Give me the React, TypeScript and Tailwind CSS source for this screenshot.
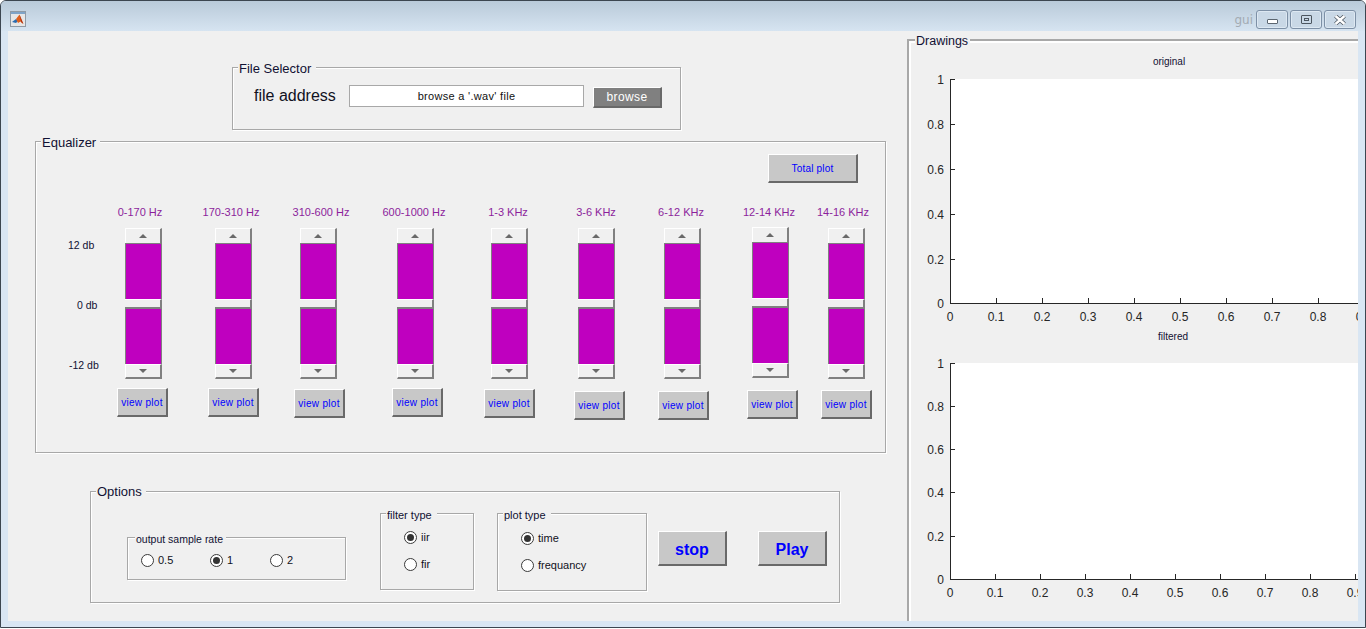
const F = "font-['Liberation_Sans',Arial,sans-serif]";

function Panel({ title, className, titleClass, children }: { title: string; className: string; titleClass: string; children?: React.ReactNode }) {
  return (
    <div className={`relative border border-[#a8a8a8] shadow-[1px_1px_0_#fff,inset_1px_1px_0_#fff] ${className}`}>
      <span className={`absolute bg-[#f0f0f0] pl-px leading-none text-[#111133] whitespace-nowrap ${titleClass}`}>{title}</span>
      {children}
    </div>
  );
}

function Raised({ className, children }: { className: string; children?: React.ReactNode }) {
  return (
    <div className={`flex items-center justify-center bg-[#c8c8c8] border-t border-l border-white border-r-2 border-b-2 border-r-[#696969] border-b-[#696969] text-[#0000ff] ${className}`}>
      {children}
    </div>
  );
}

function Radio({ on, label, className }: { on?: boolean; label: string; className?: string }) {
  return (
    <div className={`flex items-center gap-[4px] h-[13px] text-[11px] text-[#111122] ${className ?? ""}`}>
      <div className="flex h-[13px] w-[13px] shrink-0 items-center justify-center rounded-full border border-[#3a3a3a] bg-white">
        {on && <div className="h-[7px] w-[7px] rounded-full bg-[#333333]" />}
      </div>
      <span>{label}</span>
    </div>
  );
}

function ArrowBtn({ up }: { up?: boolean }) {
  return (
    <div className={`flex h-[15px] items-center justify-center bg-[#f0f0f0] border-t border-l border-white border-r-2 border-r-[#808080] ${up ? "" : "border-b-2 border-b-[#808080]"}`}>
      <svg width="8" height="4" viewBox="0 0 8 4"><path d={up ? "M0 4 L4 0 L8 4 Z" : "M0 0 L8 0 L4 4 Z"} fill="#696969" /></svg>
    </div>
  );
}

function Slider({ className }: { className: string }) {
  return (
    <div className={`flex h-[152px] w-[37px] shrink-0 flex-col ${className}`}>
      <ArrowBtn up />
      <div className="h-[56px] bg-[#bf00bf] border border-b-0 border-[#808080]" />
      <div className="h-[9px] bg-[#f0f0f0] border-t border-t-white border-b border-b-[#808080] border-r-2 border-r-[#808080]" />
      <div className="h-[56px] bg-[#bf00bf] border border-b-0 border-[#808080]" />
      <div className="flex-1"><ArrowBtn /></div>
    </div>
  );
}

const labels = [
  ["0-170 Hz", "ml-[74px]"],
  ["170-310 Hz", "ml-[31px]"],
  ["310-600 Hz", "ml-[30px]"],
  ["600-1000 Hz", "ml-[33px]"],
  ["1-3 KHz", "ml-[34px]"],
  ["3-6 KHz", "ml-[28px]"],
  ["6-12 KHz", "ml-[25px]"],
  ["12-14 KHz", "ml-[28px]"],
  ["14-16 KHz", "ml-[14px]"],
];
const sliders = [
  "ml-[25px] mt-px",
  "ml-[53px] mt-px",
  "ml-[48px] mt-px",
  "ml-[60px] mt-px",
  "ml-[57px] mt-px",
  "ml-[50px] mt-px",
  "ml-[49px] mt-px",
  "ml-[51px]",
  "ml-[39px] mt-px",
];
const buttons = [
  "ml-[81px] mt-[8px]",
  "ml-[40px] mt-[8px]",
  "ml-[35px] mt-[9px]",
  "ml-[47px] mt-[8px]",
  "ml-[41px] mt-[9px]",
  "ml-[39px] mt-[11px]",
  "ml-[33px] mt-[11px]",
  "ml-[38px] mt-[10px]",
  "ml-[23px] mt-[10px]",
];

function Plot({ vb, h, top, bottom, title, titleX, titleY, ys, step, labelY }: {
  vb: string; h: string; top: number; bottom: number; title: string; titleX: number; titleY: number; ys: [string, number][]; step: number; labelY: number;
}) {
  const xs = Array.from({ length: 10 }, (_, i) => i);
  return (
    <svg viewBox={vb} className={`block w-[447px] shrink-0 ${h}`} fontFamily="Liberation Sans, Arial, sans-serif">
      <rect x="951" y={top} width="407" height={bottom - top} fill="#fff" />
      <path d={`M950.5 ${top} V${bottom}.5 H1358`} stroke="#262626" fill="none" />
      {ys.map(([t, y]) => (
        <g key={t}>
          <path d={`M950 ${y}.5 H955`} stroke="#262626" />
          <text x="944" y={y + 5} textAnchor="end" fontSize="12" fill="#262626">{t}</text>
        </g>
      ))}
      {xs.map((i) => {
        const x = 950 + i * step;
        return (
          <g key={i}>
            <path d={`M${x}.5 ${bottom} V${bottom - 5}`} stroke="#262626" />
            <text x={x} y={labelY} textAnchor="middle" fontSize="12" fill="#262626">{i === 0 ? "0" : `0.${i}`}</text>
          </g>
        );
      })}
      <text x={titleX} y={titleY} textAnchor="middle" fontSize="10" fill="#111133">{title}</text>
    </svg>
  );
}

export default function App() {
  return (
    <div className={`h-[629px] w-[1366px] overflow-hidden bg-white ${F}`}>
      <div className="flex h-[628px] w-[1366px] flex-col overflow-hidden rounded-t-[6px] border border-[#3c4650] bg-[#d9e6f3]">
        {/* title bar */}
        <div className="flex h-[30px] shrink-0 items-start bg-gradient-to-b from-[#b9cad9] to-[#d6e4f1]">
          <svg width="16" height="16" viewBox="0 0 16 16" className="ml-[9px] mt-[10px]">
            <rect x="0.5" y="0.5" width="15" height="15" fill="#e6e6e6" stroke="#8f9aa5" />
            <rect x="1" y="1" width="14" height="2" fill="#7fa4c8" />
            <path d="M2 11 L6 8 L8 10 L6 12 Z" fill="#2b6cb0" />
            <path d="M6 8 L9.5 3.5 L13 13 L10.5 10.5 L8 12 Z" fill="#e0601c" />
            <path d="M9.5 3.5 L13.5 13 L11 11 Z" fill="#b5320f" />
          </svg>
          <span className="ml-auto mt-[12px] text-[12px] leading-[15px] text-[#a3abb3] [font-family:'DejaVu_Sans',sans-serif]">gui</span>
          <div className="ml-[3px] mr-[9px] mt-[9px] flex gap-[2px]">
            <div className="flex h-[19px] w-[32px] items-center justify-center rounded-[3px] border border-[#7d90a6] bg-[#c9d8e6] shadow-[inset_0_0_0_1px_#dde8f2]">
              <div className="mt-[3px] h-[5px] w-[11px] rounded-[1px] border border-[#5c6670] bg-white" />
            </div>
            <div className="flex h-[19px] w-[32px] items-center justify-center rounded-[3px] border border-[#7d90a6] bg-[#c9d8e6] shadow-[inset_0_0_0_1px_#dde8f2]">
              <div className="flex h-[9px] w-[11px] items-center justify-center rounded-[1px] border border-[#4c5660]">
                <div className="h-[3px] w-[5px] border border-[#4c5660]" />
              </div>
            </div>
            <div className="flex h-[19px] w-[32px] items-center justify-center rounded-[3px] border border-[#7d90a6] bg-[#c9d8e6] shadow-[inset_0_0_0_1px_#dde8f2]">
              <svg width="12" height="10" viewBox="0 0 12 10">
                <path d="M1.5 1 L10.5 9 M10.5 1 L1.5 9" stroke="#4c5660" strokeWidth="4" />
                <path d="M1.5 1 L10.5 9 M10.5 1 L1.5 9" stroke="#fff" strokeWidth="2.4" />
              </svg>
            </div>
          </div>
        </div>

        {/* client */}
        <div className="ml-[7px] flex h-[590px] w-[1350px] bg-[#f0f0f0]">
          {/* left */}
          <div className="w-[899px] shrink-0">
            <Panel title="File Selector" className="ml-[224px] mt-[36px] flex h-[63px] w-[449px] items-start" titleClass="left-[5px] -top-[6px] pr-[5px] text-[13px]">
              <span className="ml-[21px] mt-[18px] w-[95px] text-[16px] leading-[20px] text-[#111122]">file address</span>
              <div className="mt-[17px] flex h-[22px] w-[235px] items-center justify-center border border-[#a8a8a8] bg-white text-[11px] tracking-[0.3px] text-[#111]">browse a '.wav' file</div>
              <div className="ml-[9px] mt-[19px] flex h-[21px] w-[69px] items-center justify-center border-t border-l border-white border-r-2 border-b-2 border-r-[#696969] border-b-[#696969] bg-[#808080] text-[12px] tracking-[0.4px] text-white">browse</div>
            </Panel>

            <Panel title="Equalizer" className="ml-[27px] mt-[11px] h-[312px] w-[851px]" titleClass="left-[5px] -top-[6px] pr-[4px] text-[13px]">
              <Raised className="ml-[732px] mt-[12px] h-[29px] w-[90px] text-[10px] tracking-[0.2px]">Total plot</Raised>
              <div className="mt-[22px] flex h-[14px]">
                {labels.map(([t, c]) => (
                  <div key={t} className={`w-[60px] shrink-0 whitespace-nowrap text-center text-[11px] leading-[14px] text-[#8c1f9c] flex justify-center ${c}`}>{t}</div>
                ))}
              </div>
              <div className="mt-[8px] flex h-[153px] items-start">
                <div className="flex h-[153px] w-[64px] shrink-0 flex-col gap-[46px] whitespace-nowrap pt-[11px] text-[10.5px] leading-[14px] text-[#111133]">
                  <span className="pl-[32px]">12 db</span>
                  <span className="pl-[41px]">0 db</span>
                  <span className="pl-[33px]">-12 db</span>
                </div>
                {sliders.map((c, i) => <Slider key={i} className={c} />)}
              </div>
              <div className="flex items-start">
                {buttons.map((c, i) => (
                  <Raised key={i} className={`h-[29px] w-[51px] shrink-0 text-[10px] tracking-[0.3px] ${c}`}>view plot</Raised>
                ))}
              </div>
            </Panel>

            <Panel title="Options" className="ml-[82px] mt-[38px] flex h-[112px] w-[750px] items-start" titleClass="left-[5px] -top-[7px] pr-[4px] text-[13px]">
              <Panel title="output sample rate" className="ml-[36px] mt-[45px] flex h-[43px] w-[219px] shrink-0 items-start pt-[16px]" titleClass="left-[7px] -top-[4px] pr-[3px] text-[10.5px]">
                <Radio label="0.5" className="ml-[13px] w-[69px]" />
                <Radio on label="1" className="w-[60px]" />
                <Radio label="2" />
              </Panel>
              <Panel title="filter type" className="ml-[34px] mt-[21px] flex h-[77px] w-[94px] shrink-0 flex-col gap-[14px] pl-[23px] pt-[17px]" titleClass="left-[5px] -top-[4px] pr-[5px] text-[11px]">
                <Radio on label="iir" />
                <Radio label="fir" />
              </Panel>
              <Panel title="plot type" className="ml-[23px] mt-[21px] flex h-[78px] w-[150px] shrink-0 flex-col gap-[14px] pl-[23px] pt-[18px]" titleClass="left-[5px] -top-[4px] pr-[5px] text-[11px]">
                <Radio on label="time" />
                <Radio label="frequancy" />
              </Panel>
              <Raised className="ml-[11px] mt-[39px] h-[35px] w-[69px] shrink-0 pt-[3px] text-[16px] font-bold">stop</Raised>
              <Raised className="ml-[31px] mt-[39px] h-[35px] w-[69px] shrink-0 pt-[3px] text-[16px] font-bold">Play</Raised>
            </Panel>
          </div>

          {/* right */}
          <div className="relative mt-[8px] flex h-[582px] w-[451px] flex-col border-t-2 border-l-2 border-[#a8a8a8] shadow-[inset_2px_2px_0_#fff]">
            <span className="absolute left-[6px] -top-[6px] bg-[#f0f0f0] pl-px pr-[2px] text-[12.5px] leading-none text-[#111133]">Drawings</span>
            <div className="ml-[2px] mt-[9px]">
              <Plot vb="911 50 447 278" h="h-[278px]" top={79} bottom={303} title="original" titleX={1169} titleY={65} labelY={321} step={46}
                ys={[["1", 79], ["0.8", 124], ["0.6", 169], ["0.4", 214], ["0.2", 259], ["0", 303]]} />
              <Plot vb="911 328 447 293" h="h-[293px]" top={363} bottom={579} title="filtered" titleX={1173} titleY={340} labelY={597} step={45}
                ys={[["1", 363], ["0.8", 406], ["0.6", 449], ["0.4", 492], ["0.2", 536], ["0", 579]]} />
            </div>
          </div>
        </div>
      </div>
    </div>
  );
}
